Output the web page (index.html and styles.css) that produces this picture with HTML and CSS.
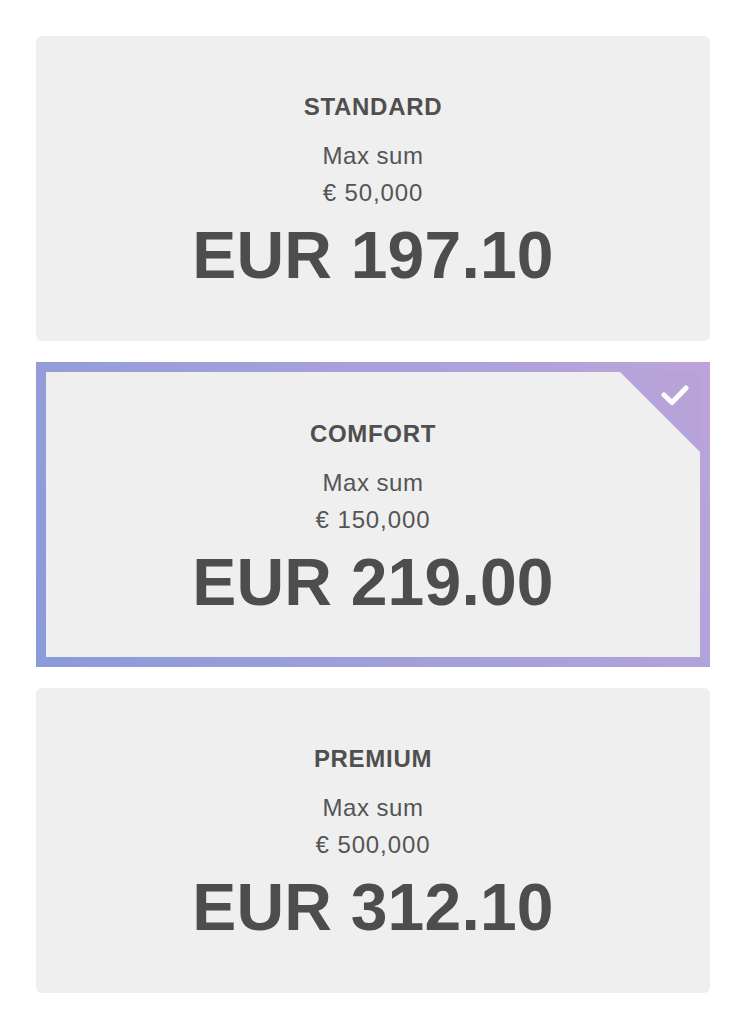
FILE: index.html
```html
<!DOCTYPE html>
<html lang="en">
<head>
<meta charset="utf-8">
<title>Plans</title>
<link rel="stylesheet" href="styles.css">
</head>
<body>
<main class="plans">
  <section class="card">
    <h2 class="title">STANDARD</h2>
    <p class="label">Max sum</p>
    <p class="sum">€ 50,000</p>
    <p class="price">EUR 197.10</p>
  </section>
  <section class="card card--selected">
    <div class="corner">
      <svg class="check" width="28" height="22" viewBox="0 0 28 22"><polyline points="3,11 11,18.5 25,4" fill="none" stroke="#ffffff" stroke-width="5" stroke-linecap="round" stroke-linejoin="round"/></svg>
    </div>
    <h2 class="title">COMFORT</h2>
    <p class="label">Max sum</p>
    <p class="sum">€ 150,000</p>
    <p class="price">EUR 219.00</p>
  </section>
  <section class="card">
    <h2 class="title">PREMIUM</h2>
    <p class="label">Max sum</p>
    <p class="sum">€ 500,000</p>
    <p class="price">EUR 312.10</p>
  </section>
</main>
</body>
</html>
```
FILE: styles.css
```css
html, body {
  margin: 0;
  padding: 0;
  background: #ffffff;
}
body {
  font-family: "Liberation Sans", Arial, Helvetica, sans-serif;
  color: #4d4d4d;
}
.plans {
  display: flex;
  flex-direction: column;
  gap: 21px;
  padding: 36px 41px 0 36px;
}
.card {
  position: relative;
  box-sizing: border-box;
  height: 305px;
  padding-top: 57px;
  background: #efefef;
  border-radius: 6px;
  display: flex;
  flex-direction: column;
  align-items: center;
  text-align: center;
}
.card--selected {
  border-radius: 0;
  border: 10px solid transparent;
  padding-top: 48px;
  background:
    linear-gradient(#efefef, #efefef) padding-box,
    linear-gradient(62deg, #8a9bd8 0%, #a4a0db 50%, #bca4da 100%) border-box;
}
.corner {
  position: absolute;
  top: 0;
  right: 0;
  width: 80px;
  height: 80px;
  background: #b8a3d9;
  clip-path: polygon(0 0, 100% 0, 100% 100%);
}
.check {
  position: absolute;
  top: 12px;
  right: 11px;
}
.title {
  margin: 0;
  font-size: 24px;
  line-height: 28px;
  font-weight: 700;
  letter-spacing: 0.7px;
  color: #4f4f4f;
}
.label, .sum {
  margin: 0;
  font-size: 24px;
  line-height: 37px;
  font-weight: 400;
  color: #555555;
}
.label {
  margin-top: 16px;
  letter-spacing: 0.5px;
}
.sum {
  letter-spacing: 0.9px;
}
.price {
  margin: 9px 0 0;
  font-size: 66px;
  line-height: 70px;
  font-weight: 700;
  letter-spacing: 0.2px;
  color: #4d4d4d;
}
```
